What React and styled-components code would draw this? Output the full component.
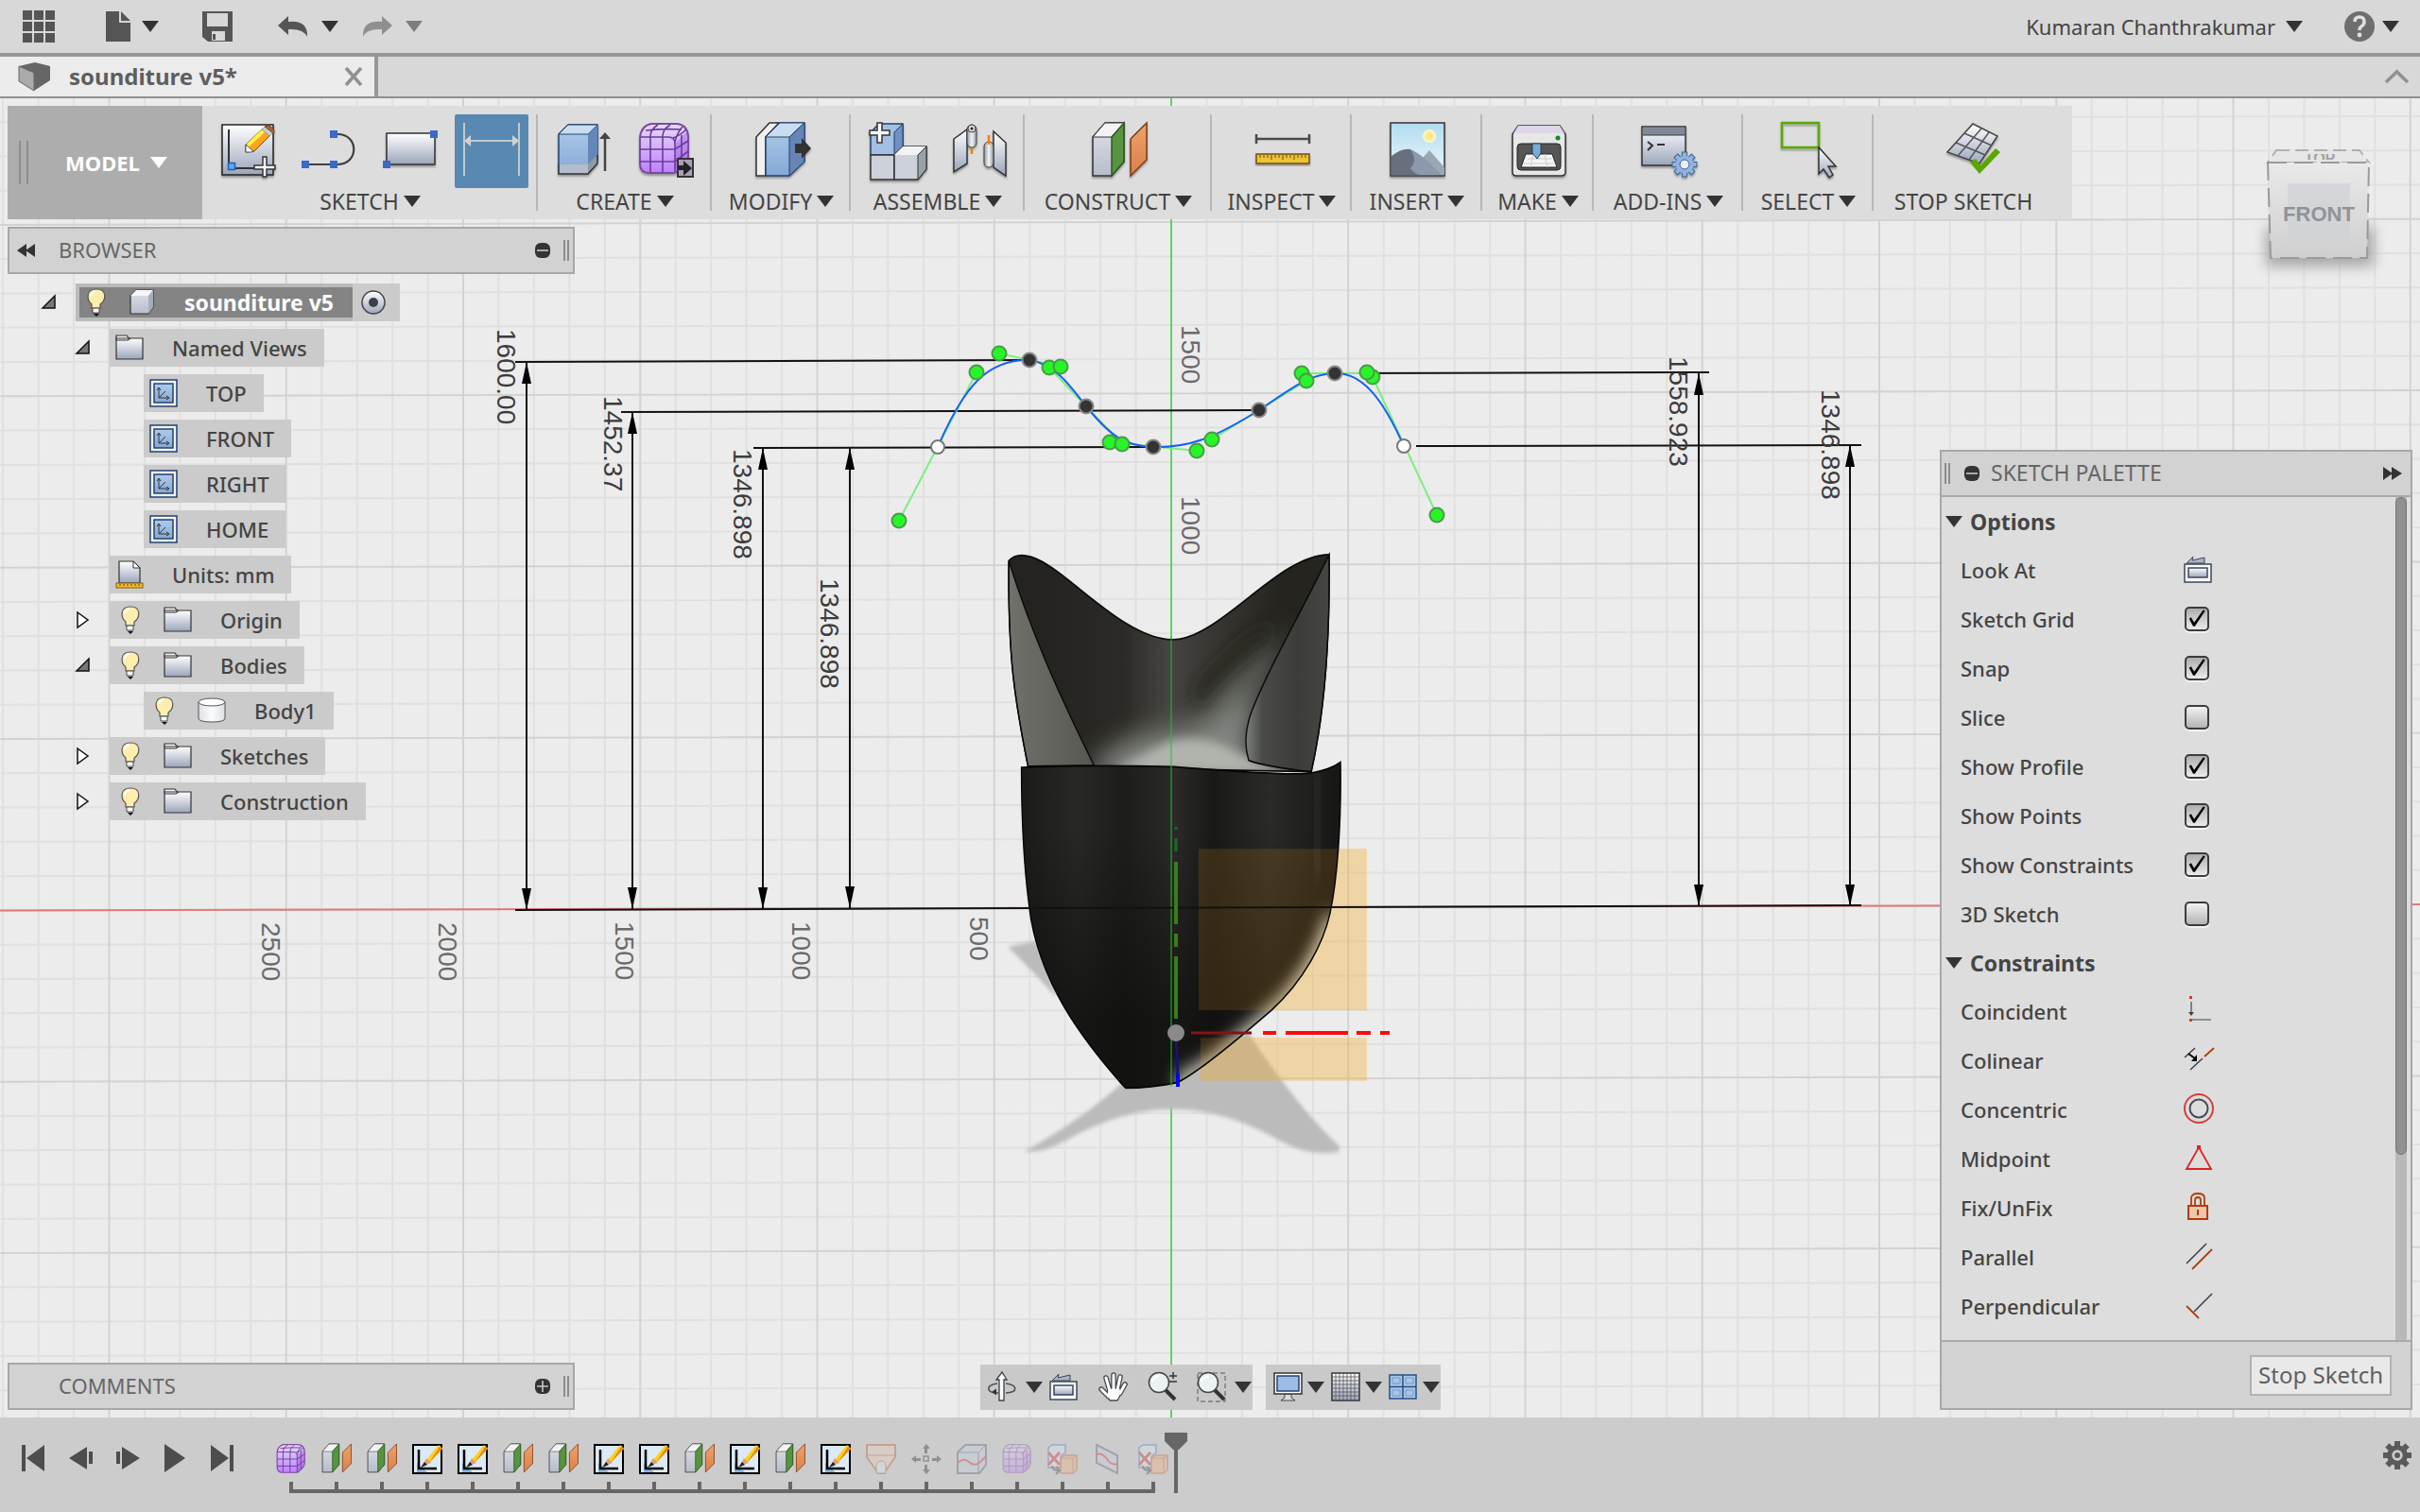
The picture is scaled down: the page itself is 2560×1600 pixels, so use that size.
import React, { useState } from 'react';
import styled, { createGlobalStyle } from 'styled-components';

const GlobalStyle = createGlobalStyle`
  * { box-sizing: border-box; }
  body { margin: 0; overflow: hidden; background: #ececec; }
  button { border: none; background: none; padding: 0; font: inherit; color: inherit; cursor: pointer; }
  svg { display: block; flex: none; overflow: visible; }
  ul { list-style: none; margin: 0; padding: 0; }
`;

const Page = styled.div`
  height: 100vh;
  display: flex;
  flex-direction: column;
  font-family: 'Noto Sans', 'Open Sans', sans-serif;
  font-size: 22px;
  line-height: 28px;
  color: #444;
`;

/* ---------- top bars ---------- */

const TopBar = styled.header`
  height: 60px;
  flex: none;
  display: flex;
  align-items: center;
  padding: 0 22px 0 24px;
  background: #d8d8d8;
  border-bottom: 4px solid #979797;
`;

const BarButton = styled.button`
  display: flex;
  align-items: center;
  gap: ${(props) => props.$gap || 12}px;
  margin-right: ${(props) => props.$after || 0}px;
  opacity: ${(props) => (props.$dim ? 0.55 : 1)};
`;

const Spacer = styled.div`
  flex: 1;
`;

const TabBar = styled.nav`
  height: 44px;
  flex: none;
  display: flex;
  align-items: center;
  background: #d8d8d8;
  border-bottom: 2px solid #909090;
  padding-right: 12px;
`;

const Tab = styled.div`
  width: 400px;
  height: 100%;
  display: flex;
  align-items: center;
  padding: 0 12px 0 20px;
  background: #ececec;
  border-right: 4px solid #979797;
  font-size: 24px;
  font-weight: 700;
  color: #5e5e5e;
`;

const TabName = styled.span`
  flex: 1;
  padding-left: 20px;
`;

/* ---------- canvas ---------- */

const Canvas = styled.main`
  flex: 1;
  min-height: 0;
  position: relative;
  overflow: hidden;
`;

const Scene = styled.svg`
  position: absolute;
  inset: 0;
  width: 100%;
  height: 100%;
`;

const Overlay = styled.div`
  position: relative;
  height: 100%;
  display: flex;
  flex-direction: column;
  padding: 8px;
`;

const TopRow = styled.div`
  height: 120px;
  display: flex;
  align-items: flex-start;
  justify-content: space-between;
`;

const Toolbar = styled.div`
  height: 120px;
  display: flex;
  background: #dddddd;
  padding-right: 20px;
`;

const ModelButton = styled.button`
  width: 206px;
  display: flex;
  align-items: center;
  gap: 11px;
  padding-left: 12px;
  background: #adadad;
  color: #fff;
  font-weight: 700;
`;

const ModelGrip = styled.span`
  width: 10px;
  height: 46px;
  border: solid #8c8c8c;
  border-width: 0 2px;
  margin-right: 28px;
`;

const Group = styled.section`
  min-width: ${(props) => props.$w}px;
  margin: 9px 0;
  display: flex;
  flex-direction: column;
  align-items: center;
  border-right: 2px solid ${(props) => (props.$last ? 'transparent' : '#b8b8b8')};
`;

const Tools = styled.div`
  display: flex;
  gap: 8px;
  padding-left: ${(props) => (props.$last ? 20 : 0)}px;
`;

const Tool = styled.button`
  width: 78px;
  height: 78px;
  display: flex;
  align-items: center;
  justify-content: center;
  padding-left: ${(props) => (props.$active ? 0 : 4)}px;
  border-radius: 2px;
  background: ${(props) => (props.$active ? '#5789b2' : 'transparent')};
`;

const GroupLabel = styled.button`
  display: flex;
  align-items: center;
  gap: 5px;
  padding-left: 2px;
  font-size: 23px;
  white-space: nowrap;
`;

const Columns = styled.div`
  flex: 1;
  min-height: 0;
  padding-top: 8px;
  display: grid;
  grid-template-columns: 600px 1fr 600px;
`;

const LeftColumn = styled.div`
  display: flex;
  flex-direction: column;
  justify-content: space-between;
`;

const BottomCell = styled.div`
  display: flex;
  align-items: flex-end;
  justify-content: ${(props) => props.$justify};
  gap: 14px;
`;

const PanelBar = styled.div`
  height: 50px;
  display: flex;
  align-items: center;
  padding: 0 4px 0 8px;
  background: #d2d2d2;
  border: 2px solid #a8a8a8;
  color: #666;
`;

const PanelTitle = styled.span`
  flex: 1;
  padding: 0 0 2px ${(props) => props.$left}px;
`;

const Grip = styled.span`
  width: 6px;
  height: 22px;
  border: solid #8c8c8c;
  border-width: 0 2px;
  margin: ${(props) => props.$margin || '0'};
`;

/* ---------- browser tree ---------- */

const Tree = styled.ul`
  display: flex;
  flex-direction: column;
  gap: 8px;
  margin-top: 10px;
`;

const TreeItem = styled.li`
  display: flex;
  height: 40px;
  padding-left: ${(props) => 36 + props.$level * 36}px;
`;

const Twisty = styled.button`
  width: 36px;
  display: flex;
  align-items: center;
`;

const TreeChip = styled.div`
  display: flex;
  align-items: center;
  padding: 0 18px 0 ${(props) => (props.$bulb ? 12 : 6)}px;
  background: #cbcbcb;
  font-weight: 500;

  span {
    padding-left: 30px;
  }
`;

const BulbSlot = styled.button`
  margin-right: 25px;
`;

const RootChip = styled.div`
  display: flex;
  align-items: center;
  background: #cbcbcb;
  padding-right: 14px;
  gap: 8px;
`;

const RootName = styled.div`
  height: 40px;
  display: flex;
  align-items: center;
  padding: 0 20px 0 8px;
  border: solid #bababa;
  border-width: 4px 0 4px 4px;
  background: #848484;
  color: #fff;
  font-size: 23px;
  font-weight: 700;

  span {
    padding-left: 32px;
  }
`;

/* ---------- navigation ---------- */

const NavBar = styled.div`
  height: 48px;
  display: flex;
  align-items: center;
  gap: 7px;
  padding: 0 1px 0 8px;
  background: #c9c9c9;
`;

const NavButton = styled.button`
  display: flex;
  align-items: center;
  gap: ${(props) => props.$gap || 0}px;
  margin-right: ${(props) => props.$after || 0}px;
`;

/* ---------- sketch palette ---------- */

const Palette = styled.aside`
  width: 500px;
  border: 2px solid #a8a8a8;
  background: #dddddd;
`;

const PaletteHead = styled.div`
  height: 48px;
  display: flex;
  align-items: center;
  padding: 0 9px 0 3px;
  background: #d2d2d2;
  border-bottom: 2px solid #a8a8a8;
  font-size: 23px;
  color: #666;
`;

const PaletteBody = styled.div`
  display: flex;
  padding-right: 4px;
`;

const PaletteList = styled.div`
  flex: 1;
  padding-bottom: 10px;
`;

const SectionHead = styled.button`
  height: 51px;
  display: flex;
  align-items: center;
  gap: 8px;
  padding-left: 4px;
  font-size: 23px;
  font-weight: 700;
`;

const PaletteRow = styled.div`
  height: 52px;
  display: grid;
  grid-template-columns: 236px 1fr;
  align-items: center;
  justify-items: start;
  padding-left: 20px;
  font-weight: 500;
`;

const ScrollTrack = styled.div`
  width: 12px;
  background: #b7b8ba;
`;

const ScrollThumb = styled.div`
  height: 78%;
  border: 1px solid #747474;
  border-radius: 6px;
  background: #919191;
`;

const CheckBox = styled.input`
  appearance: none;
  width: 26px;
  height: 26px;
  margin: 0 0 0 1px;
  border: 2px solid #3c3c3c;
  border-radius: 5px;
  background: linear-gradient(#f2f2f2, #b4b4b4);
  box-shadow: 0 2px 0 #f2f2f2;

  &:checked {
    background: linear-gradient(#adadad, #ebebeb);
  }

  &:checked::before {
    content: '';
    display: block;
    width: 18px;
    height: 18px;
    margin: 1px 0 0 2px;
    background: #000;
    clip-path: polygon(4% 54%, 16% 46%, 34% 76%, 88% 2%, 98% 8%, 38% 98%, 28% 98%);
  }
`;

const PaletteFoot = styled.div`
  height: 72px;
  display: flex;
  align-items: center;
  justify-content: flex-end;
  padding-right: 20px;
  background: #d2d2d2;
  border-top: 2px solid #a8a8a8;
`;

const StopButton = styled.button`
  height: 43px;
  padding: 0 7px;
  border: 2px solid #b2b2b2;
  background: #e9e9e9;
  font-size: 24px;
  color: #5e5e5e;
`;

/* ---------- timeline ---------- */

const Timeline = styled.footer`
  height: 100px;
  flex: none;
  display: flex;
  align-items: flex-start;
  padding: 0 8px 0 10px;
  background: #cccccc;
`;

const PlayButton = styled.button`
  width: 50px;
  height: 86px;
  display: flex;
  align-items: center;
  justify-content: center;
`;

const History = styled.div`
  padding: 28px 0 0 24px;
`;

const Features = styled.div`
  display: flex;
`;

const Feature = styled.button`
  width: 48px;
  display: flex;
  justify-content: center;
  opacity: ${(props) => (props.$rolled ? 0.35 : 1)};
`;

const Track = styled.div`
  height: 12px;
  margin: 8px 22px 0;
  display: flex;
  justify-content: space-between;
  border-bottom: 4px solid #666;
`;

const Tick = styled.i`
  width: 4px;
  height: 8px;
  background: #666;
`;

const Marker = styled.svg`
  margin: 16px 0 0 -12px;
`;

const GearButton = styled.button`
  margin: 24px 0 0 auto;
`;

/* ---------- icons ---------- */

const Defs = () => (
  <svg width="0" height="0" style={{ position: 'absolute' }} aria-hidden="true">
    <defs>
      <linearGradient id="steel" x1="0" y1="0" x2="0" y2="1">
        <stop offset="0" stopColor="#fff" />
        <stop offset="1" stopColor="#9ba5bb" />
      </linearGradient>
      <linearGradient id="blue" x1="0" y1="0" x2="0" y2="1">
        <stop offset="0" stopColor="#b0cbea" />
        <stop offset="1" stopColor="#84a9d6" />
      </linearGradient>
      <linearGradient id="purple" x1="0" y1="0" x2="0" y2="1">
        <stop offset="0" stopColor="#e6dcf3" />
        <stop offset="1" stopColor="#bd80ff" />
      </linearGradient>
      <linearGradient id="greySide" x1="0" y1="0" x2="0" y2="1">
        <stop offset="0" stopColor="#dfe2e8" />
        <stop offset="1" stopColor="#b7bccb" />
      </linearGradient>
      <linearGradient id="sky" x1="0" y1="0" x2="0" y2="1">
        <stop offset="0" stopColor="#b1dcf0" />
        <stop offset="1" stopColor="#eef7fc" />
      </linearGradient>
      <linearGradient id="orangeFace" x1="0" y1="0" x2="0" y2="1">
        <stop offset="0" stopColor="#f0a36f" />
        <stop offset="1" stopColor="#d97f49" />
      </linearGradient>
      <linearGradient id="tube" x1="0" y1="0" x2="1" y2="0">
        <stop offset="0" stopColor="#8d98a3" />
        <stop offset="0.5" stopColor="#f4f6f8" />
        <stop offset="1" stopColor="#8d98a3" />
      </linearGradient>
      <filter id="drop" x="-20%" y="-20%" width="140%" height="150%">
        <feDropShadow dx="0" dy="2" stdDeviation="1" floodOpacity="0.35" />
      </filter>
    </defs>
  </svg>
);

const Icon = ({ size = 60, h, box = size, children }) => (
  <svg
    width={size}
    height={h || size}
    viewBox={`0 0 ${box} ${h || box}`}
    fill="none"
    aria-hidden="true"
  >
    {children}
  </svg>
);

const Caret = ({ color = '#333' }) => (
  <Icon size={18} h={12}>
    <path d="M0 0h18L9 12z" fill={color} />
  </Icon>
);

const SketchIcon = () => (
  <Icon>
    <g filter="url(#drop)">
      <rect x="1" y="2" width="54" height="53" fill="url(#steel)" stroke="#222" strokeWidth="1.5" />
      <path d="M8 7v41h28" stroke="#333" strokeWidth="2" />
      <rect x="7.5" y="42.5" width="7" height="7" fill="#5aa5f5" stroke="#1f62b0" strokeWidth="1.5" />
      <path d="M26 23L44 6l8 7-17 17-9 1z" fill="#f9a61c" stroke="#7a4a12" strokeWidth="1" />
      <path d="M28 24L46 7" stroke="#fff04a" strokeWidth="4" />
      <path d="M26 23l8 7-2 1h-6z" fill="#fff" stroke="#333" strokeWidth="0.8" />
      <path d="M43 7l4-4 8 7-4 4z" fill="#c9ccd2" stroke="#777" strokeWidth="0.6" />
      <path d="M46 4q4-3 8 1t1 6z" fill="#a5643d" stroke="#6b3a1a" strokeWidth="0.8" />
      <path d="M44 36h4v9h9v4h-9v8h-4v-8h-9v-4h9z" fill="#fff" stroke="#333" strokeWidth="1.5" />
    </g>
  </Icon>
);

const LineIcon = () => (
  <Icon>
    <path d="M4 44h33c23 0 23-32 0-32" stroke="#3f3f42" strokeWidth="2.2" />
    <path d="M-1 40h8v8h-8zM29 40h8v8h-8zM29 8h8v8h-8z" fill="#3a69c8" />
  </Icon>
);

const RectIcon = () => (
  <Icon>
    <rect x="3" y="11" width="51" height="33" fill="url(#steel)" stroke="#333" strokeWidth="1.5" filter="url(#drop)" />
    <path d="M-1 40h8v8h-8zM49 8h8v8h-8z" fill="#3a69c8" />
  </Icon>
);

const DimensionIcon = () => (
  <Icon>
    <path d="M1 0v56M59 0v56M6 19h48" stroke="#c4c8cb" strokeWidth="2" />
    <path d="M1 19l7-6v12zM59 19l-7-6v12z" fill="#d0d3d5" />
  </Icon>
);

const ExtrudeIcon = () => (
  <Icon>
    <g filter="url(#drop)">
      <path d="M2 12L12 2h31v37L33 53H2z" fill="url(#blue)" stroke="#24406e" strokeWidth="1.5" />
      <path d="M2 12L12 2h31L33 12z" fill="#c9dcf0" stroke="#24406e" />
      <path d="M33 12L43 2v33L33 44z" fill="#6586b8" />
      <path d="M2 44h31v10H2z" fill="#b5bccb" />
      <path d="M33 44l10-10v9L33 54z" fill="#8f9aa5" />
      <path d="M2 44v10h31l10-11v-9" stroke="#333" strokeWidth="1.5" />
    </g>
    <path d="M51 51V16" stroke="#444" strokeWidth="2.5" />
    <path d="M45 17l6-7 6 7z" fill="#444" />
  </Icon>
);

const FormShape = () => (
  <>
    <path
      d="M14 1h27q11 1 12 13v22q-1 7-10 14-2 3-7 3H12Q2 53 2 43V16Q3 3 14 1z"
      fill="url(#purple)"
      stroke="#7d4ba3"
      strokeWidth="2"
    />
    <path d="M39 22Q45 15 52 9l1 8v18q-3 7-10 14l-4 2z" fill="#9a4ed6" opacity="0.4" />
    <path
      d="M3 15h29q7 0 7 7v30M2 28h37l14-9M2 41h37l14-11M13 52V14q0-7 8-12M26 53V14q0-7 8-12M39 20q2-9 8-16M8 8q20-2 38-1M46 47V13M37 16q8-3 14-9"
      stroke="#6a3aa0"
      strokeWidth="1.6"
    />
  </>
);

const FormIcon = () => (
  <Icon>
    <g filter="url(#drop)">
      <FormShape />
    </g>
    <rect x="42" y="38" width="16" height="19" fill="#a9a0b5" stroke="#333" strokeWidth="2" />
    <path d="M43 45h5v-5l9 8-9 8v-6h-5z" fill="#222" />
  </Icon>
);

const ModifyIcon = () => (
  <Icon>
    <g filter="url(#drop)">
      <path d="M2 15L16 0h10L12 15v41H2z" fill="#f0f0f0" stroke="#333" strokeWidth="1.5" />
      <path d="M12 15L27 0h26v41L37 56H12z" fill="url(#blue)" stroke="#24406e" strokeWidth="1.5" />
      <path d="M12 15L27 0h26L37 15z" fill="#c9dcf0" stroke="#24406e" />
      <path d="M37 15L53 0v41L37 56z" fill="#6685b4" stroke="#24406e" />
      <path d="M43 22h7v-6l10 11-10 11v-6h-7z" fill="#333" />
    </g>
  </Icon>
);

const ComponentIcon = () => (
  <Icon>
    <g filter="url(#drop)">
      <path d="M1 10L10 1h25v24L26 34H1z" fill="#a3bfe3" stroke="#24406e" strokeWidth="1.5" />
      <path d="M26 10l9-9v24l-9 9z" fill="#6f8fc4" stroke="#24406e" />
      <path d="M1 34h25v26H1z" fill="#cdd1d9" stroke="#333" strokeWidth="1.5" />
      <path d="M26 34l9-9h25v24L51 60H26z" fill="#cdd1d9" stroke="#333" strokeWidth="1.5" />
      <path d="M26 34l9-9h25l-9 9z" fill="#f1f2f4" />
      <path d="M51 34l9-9v24L51 60z" fill="#98a2ab" stroke="#333" />
      <path d="M8 0h5v8h8v5h-8v8H8v-8H0V8h8z" fill="#fff" stroke="#333" strokeWidth="1.5" />
    </g>
  </Icon>
);

const JointIcon = () => (
  <Icon>
    <g filter="url(#drop)">
      <path d="M3 17L17 7v36L3 52z" fill="url(#steel)" stroke="#333" strokeWidth="1.5" />
      <rect x="17" y="2" width="10" height="24" rx="5" fill="url(#tube)" stroke="#444" />
      <circle cx="22" cy="6" r="4" fill="#ddd" stroke="#444" />
      <circle cx="22" cy="6" r="1.5" fill="#222" />
      <path d="M45 9l13 12v35L45 47z" fill="url(#steel)" stroke="#333" strokeWidth="1.5" />
      <rect x="35" y="20" width="10" height="27" rx="5" fill="url(#tube)" stroke="#444" />
    </g>
    <path d="M22 27v6M40 13v10" stroke="#ff7a00" strokeWidth="2.5" />
  </Icon>
);

const PlanesShape = () => (
  <>
    <path d="M2 15L15 0h20v41L22 56H2z" fill="url(#greySide)" stroke="#333" strokeWidth="1.5" />
    <path d="M2 15L15 0h20L22 15z" fill="#f3f3f5" stroke="#333" />
    <path d="M22 15L35 0v41L22 56z" fill="#58933f" stroke="#2c5a1c" strokeWidth="1.5" />
    <path d="M42 17L59 0v39L42 56z" fill="url(#orangeFace)" stroke="#7a3a12" strokeWidth="1.5" />
  </>
);

const ConstructIcon = () => (
  <Icon>
    <g filter="url(#drop)">
      <PlanesShape />
    </g>
  </Icon>
);

const InspectIcon = () => (
  <Icon>
    <path d="M2 17h56M2 12v10M58 12v10" stroke="#4a4a4a" strokeWidth="2.5" />
    <rect x="2" y="33" width="56" height="10" fill="#eac435" stroke="#7a4a12" strokeWidth="1.5" filter="url(#drop)" />
    <path d="M6 34v3M10 34v3M14 34v3M18 34v5M22 34v3M26 34v3M30 34v5M34 34v3M38 34v3M42 34v5M46 34v3M50 34v3M54 34v3" stroke="#6b4a12" />
  </Icon>
);

const InsertIcon = () => (
  <Icon>
    <g filter="url(#drop)">
      <rect x="1" y="0" width="57" height="56" fill="url(#sky)" stroke="#333" strokeWidth="1.5" />
      <circle cx="42" cy="14" r="7" fill="#fff6c8" />
      <circle cx="42" cy="14" r="5" fill="#ffe98a" />
      <path d="M28 45l14-16 16 18v8H34z" fill="#9aa7b5" />
      <path d="M2 35q12-9 20-7 14 8 32 27H2z" fill="#68707f" />
      <path d="M22 28q8 12 0 20 4 6 10 7h22Q36 34 22 28z" fill="#8c98ab" />
    </g>
  </Icon>
);

const MakeIcon = () => (
  <Icon>
    <g filter="url(#drop)">
      <path d="M8 3h44l6 9v40q0 4-4 4H6q-4 0-4-4V12z" fill="#e7e7e7" stroke="#333" strokeWidth="1.5" />
      <path d="M8 3h44l5 8H3z" fill="#dcd6e6" />
      <rect x="7" y="22" width="46" height="28" rx="4" fill="#555" stroke="#222" />
      <path d="M16 33h28l5 14H11z" fill="#f5f5f5" stroke="#222" />
      <path d="M18 38h26M14 43h32M24 33l-3 14M36 33l3 14" stroke="#ccc" />
      <path d="M23 22h9v10l-4 6-5-6z" fill="#79acd6" stroke="#245" />
    </g>
    <circle cx="50" cy="16" r="2.5" fill="#128a1a" />
  </Icon>
);

const Cog = ({ cx, cy, r, fill, stroke, hole }) => {
  const teeth = [0, 45, 90, 135];
  return (
    <g transform={`translate(${cx} ${cy})`}>
      {teeth.map((a) => (
        <rect
          key={a}
          x={-r * 0.2}
          y={-r}
          width={r * 0.4}
          height={r * 2}
          fill={fill}
          stroke={stroke}
          transform={`rotate(${a})`}
        />
      ))}
      <circle r={r * 0.72} fill={fill} />
      <circle r={r * 0.38} fill={hole} stroke={stroke} />
    </g>
  );
};

const AddinsIcon = () => (
  <Icon>
    <g filter="url(#drop)">
      <rect x="1" y="4" width="46" height="41" fill="url(#steel)" stroke="#333" strokeWidth="1.5" />
      <rect x="2" y="5" width="44" height="8" fill="#7f8a99" />
      <path d="M2 13h44" stroke="#333" />
      <path d="M7 20l5 4-5 5M17 23h8" stroke="#333" strokeWidth="2" />
      <Cog cx={46} cy={44} r={13} fill="#8fb4de" stroke="#3e6290" hole="#e8eef6" />
    </g>
  </Icon>
);

const SelectIcon = () => (
  <Icon>
    <rect x="1" y="0" width="39" height="26" stroke="#58a800" strokeWidth="2.5" filter="url(#drop)" />
    <path d="M40 26v28l5-5 6 9 4-3-5-9h8z" fill="url(#steel)" stroke="#333" strokeWidth="1.5" filter="url(#drop)" />
  </Icon>
);

const StopIcon = () => (
  <Icon>
    <g filter="url(#drop)">
      <path d="M29 1l26 13-19 29L2 31z" fill="url(#steel)" stroke="#444" strokeWidth="1.5" />
      <path d="M38 6L13 35M46 10L25 39M20 11l29 13M11 21l31 13" stroke="#555" strokeWidth="1.5" />
    </g>
    <path d="M26 42l6-4 5 7 16-18 5 4-22 23z" fill="#58a800" />
  </Icon>
);

const Bulb = () => (
  <Icon size={20} h={30}>
    <path d="M10 1c-12 0-10 12-5 16v4h9v-4c6-4 8-16-4-16z" fill="#fdeeae" stroke="#555" strokeWidth="1.2" />
    <path d="M4 8q1-4 5-5" stroke="#fff" strokeWidth="2" />
    <path d="M6 21h7v5H6z" fill="#fff" stroke="#444" />
    <path d="M7 27h6l-3 3z" fill="#111" />
  </Icon>
);

const FolderIcon = () => (
  <Icon size={30} h={28}>
    <path d="M1 1h11l3 4h-14z" fill="#eef0f5" stroke="#333" strokeWidth="1.2" />
    <path d="M1 4h28v22H1z" fill="url(#steel)" stroke="#333" strokeWidth="1.2" />
    <path d="M1 6h12l3-2" stroke="#333" strokeWidth="1.2" />
  </Icon>
);

const ViewIcon = () => (
  <Icon size={30}>
    <rect x="1" y="1" width="28" height="28" fill="#eef4fb" stroke="#24406e" strokeWidth="1.5" />
    <rect x="5" y="5" width="20" height="20" fill="url(#blue)" stroke="#24406e" strokeWidth="1.5" />
    <path d="M10 10v10h10M10 20l7-7M8 12l2-3 2 3M18 18l3 2-3 2" stroke="#333" />
  </Icon>
);

const UnitsIcon = () => (
  <Icon size={30}>
    <path d="M4 1h15l7 7v16H4z" fill="url(#steel)" stroke="#333" strokeWidth="1.2" />
    <path d="M19 1v7h7z" fill="#fff" stroke="#333" />
    <rect x="1" y="24" width="28" height="5" fill="#f0b92a" stroke="#8a5a12" />
    <path d="M5 25v2M9 25v2M13 25v2M17 25v2M21 25v2M25 25v2" stroke="#6b4a12" />
  </Icon>
);

const BodyIcon = () => (
  <Icon size={30} h={28}>
    <path d="M1 5v17q0 4 14 4t14-4V5z" fill="url(#tube)" />
    <path d="M1 5v17q0 4 14 4t14-4V5z" fill="#fff" fillOpacity="0.7" stroke="#555" />
    <ellipse cx="15" cy="5" rx="14" ry="4" fill="#fff" stroke="#555" />
  </Icon>
);

const CubeIcon = () => (
  <Icon size={26} h={28}>
    <path d="M1 7l6-6h18v18l-5 7H1z" fill="url(#greySide)" stroke="#333" strokeWidth="1.2" />
    <path d="M1 7l6-6h18l-5 6z" fill="#f6f6f8" />
    <path d="M20 7l5-6v18l-5 7z" fill="#a4adb8" />
  </Icon>
);

const TwistyIcon = ({ open }) => (
  <Icon size={16} h={18}>
    {open ? (
      <path d="M1 15L14 2v13z" fill="#777" stroke="#111" strokeWidth="1.5" />
    ) : (
      <path d="M2 1l11 8-11 8z" fill="#fff" stroke="#111" strokeWidth="1.5" />
    )}
  </Icon>
);

const ToggleIcon = ({ plus }) => (
  <Icon size={16}>
    <rect width="16" height="16" rx="6" fill="#333" />
    <path d={plus ? 'M2 8h12M8 2v12' : 'M2 8h12'} stroke="#c8c8c8" strokeWidth="1.6" />
  </Icon>
);

const LookAtIcon = () => (
  <Icon size={30}>
    <path d="M3 8l7-7-1 4 13-3v6z" fill="#aab4c4" stroke="#3b4658" />
    <rect x="1" y="9" width="28" height="19" fill="#fff" stroke="#3b4658" strokeWidth="1.5" />
    <rect x="5" y="13" width="20" height="10" fill="url(#steel)" stroke="#3b4658" strokeWidth="1.5" />
  </Icon>
);

const constraintIcons = {
  Coincident: (
    <>
      <path d="M8 6v14M8 25h21" stroke="#444" strokeWidth="1.2" />
      <path d="M5 17l3 4 3-4z" fill="#444" />
      <path d="M6 0h3v3H6zM6 24h3v3H6z" fill="#e8340c" />
    </>
  ),
  Colinear: (
    <>
      <path d="M1 13L12 3M7 26l13-12" stroke="#3b3f50" strokeWidth="1.5" />
      <path d="M22 12L32 3" stroke="#b13c0c" strokeWidth="1.8" />
      <path d="M5 9l7 5" stroke="#000" strokeWidth="2" />
      <path d="M14 10v7H8z" fill="#000" />
    </>
  ),
  Concentric: (
    <>
      <circle cx="16" cy="15" r="15" stroke="#dd3a36" strokeWidth="2" />
      <circle cx="16" cy="15" r="9.5" stroke="#414b5a" strokeWidth="2" />
    </>
  ),
  Midpoint: (
    <>
      <path d="M16 4l13 23H3z" stroke="#dd2222" strokeWidth="1.8" />
      <path d="M14 2h4v4h-4z" fill="#dd2222" />
    </>
  ),
  'Fix/UnFix': (
    <>
      <path d="M8 14V6q0-5 7-5t7 5v8M12 14V8q0-3 3-3t3 3v6" stroke="#b13c0c" strokeWidth="1.8" />
      <rect x="5" y="14" width="20" height="14" fill="#f1c4ad" stroke="#b13c0c" strokeWidth="2" />
      <path d="M15 18v6" stroke="#b13c0c" strokeWidth="2" />
    </>
  ),
  Parallel: (
    <>
      <path d="M3 23L24 2" stroke="#3b3f50" strokeWidth="1.6" />
      <path d="M9 29L30 8" stroke="#b13c0c" strokeWidth="1.8" />
    </>
  ),
  Perpendicular: (
    <>
      <path d="M11 22L30 3" stroke="#3b3f50" strokeWidth="1.6" />
      <path d="M3 16l13 13" stroke="#b13c0c" strokeWidth="1.8" />
    </>
  ),
};

const SmallSketch = () => (
  <Icon size={32}>
    <rect x="1" y="1" width="30" height="30" fill="#dceaf6" stroke="#000" strokeWidth="2" />
    <path d="M5 30V20l11 10z" fill="#5f9fd8" opacity="0.7" />
    <path d="M7 6v20h19" stroke="#000" strokeWidth="2.5" />
    <path d="M15 17L28 1l4 4-14 15z" fill="#ffcf1a" />
    <path d="M18 20L32 5v-1l-3-1z" fill="#e08a10" />
    <path d="M11 23l4-8 5 5z" fill="#e0a070" />
    <path d="M9 25l4-6 3 3z" fill="#222" />
  </Icon>
);

const SmallPlanes = () => (
  <Icon size={32} box={60}>
    <PlanesShape />
  </Icon>
);

const SmallForm = () => (
  <Icon size={32} box={56}>
    <FormShape />
  </Icon>
);

const SmallStitch = () => (
  <Icon size={32}>
    <path d="M1 1h30v13L19 31h-6L1 14z" fill="#f3cdb8" stroke="#b5572a" strokeWidth="2" />
    <path d="M1 12h30" stroke="#b5572a" />
    <path d="M11 31v-7q0-6 5-6t5 6v7z" fill="#e8e8e8" stroke="#666" />
  </Icon>
);

const SmallMove = () => (
  <Icon size={32}>
    <path d="M16 0l4 5h-3v5h-3V5h-2zM16 32l4-5h-3v-5h-3v5h-2zM0 16l5-4v3h5v3H5v2zM32 16l-5-4v3h-5v3h5v2z" fill="#222" />
    <rect x="13" y="13" width="5" height="5" stroke="#222" strokeWidth="1.5" />
  </Icon>
);

const SmallSplit = () => (
  <Icon size={32}>
    <path d="M1 9l8-8h22v21l-7 9H1z" fill="#c3cfdf" stroke="#4c5a73" strokeWidth="2" />
    <path d="M1 9h22l8-8M23 9v22" stroke="#4c5a73" />
    <path d="M1 20q7-6 12-1t11 1l7-7" stroke="#e02020" strokeWidth="2" />
  </Icon>
);

const SmallCopy = () => (
  <Icon size={32}>
    <path d="M1 4l4-3h14v8l-5 4v12H1z" fill="#dce8f5" stroke="#2c7ac4" strokeWidth="1.5" />
    <path d="M14 15l4-3h13v15l-4 4H14z" fill="#f5ad78" stroke="#c06028" strokeWidth="1.5" />
    <path d="M14 15h13v16M27 15l4-3" stroke="#c06028" />
    <path d="M1 9l12 13M13 9L1 22" stroke="#d01c1c" strokeWidth="3" />
    <path d="M5 23q0 5 7 5M9 24l4 4-4 4" stroke="#333" strokeWidth="2" />
  </Icon>
);

const SmallPlaneSplit = () => (
  <Icon size={32}>
    <path d="M4 1l22 11v19L4 20z" fill="#c3cbd8" stroke="#4c5a73" strokeWidth="2" />
    <path d="M4 11q6-2 11 5t11 5" stroke="#e02020" strokeWidth="2" />
  </Icon>
);

const OrbitIcon = () => (
  <Icon size={30} h={32}>
    <path d="M10 12C-3 14-2 22 11 22M19 12c13 2 13 9 0 10" stroke="#4a4f55" strokeWidth="1.6" />
    <path d="M17 30h-5V8H9l6-8 5 8h-3z" fill="#fff" stroke="#3a4046" strokeWidth="1.3" />
    <path d="M9 17.5v7L4 21z" fill="#333" />
  </Icon>
);

const fingers = 'M3 18l8 8M8 6l4 14M16 3v15M23 5l-3 14M28 13l-5 9';

const HandIcon = () => (
  <Icon size={30} h={32}>
    <g strokeLinecap="round">
      <path d={fingers} stroke="#444a50" strokeWidth="5.6" />
      <path d="M10 17h13l1 6-4 7h-8l-3-6z" fill="#fff" stroke="#444a50" strokeWidth="1.4" strokeLinejoin="round" />
      <path d={fingers} stroke="#fff" strokeWidth="3" />
    </g>
  </Icon>
);

const ZoomIcon = ({ windowed }) => (
  <Icon size={31} h={32}>
    {windowed && <path d="M1 1h29v30H1z" stroke="#555" strokeDasharray="5 3" />}
    <path d="M19 19l10 10" stroke="#333" strokeWidth="4" />
    <circle cx="12" cy="11" r="10.5" fill="#e8f3f2" stroke="#444" strokeWidth="1.5" />
    <path d="M5 10q2-5 7-6" stroke="#fff" strokeWidth="2" />
    {!windowed && <path d="M27 0v7M23 4h8M23 10h8" stroke="#333" strokeWidth="1.5" />}
  </Icon>
);

const MonitorIcon = () => (
  <Icon size={31} h={32}>
    <path d="M12 23h7v4l4 3H8l4-3z" fill="#ddd" stroke="#444" />
    <rect x="1" y="1" width="29" height="22" fill="#fff" stroke="#333" strokeWidth="1.5" />
    <rect x="4" y="4" width="23" height="16" fill="#9bbde4" stroke="#24406e" strokeWidth="1.5" />
  </Icon>
);

const GridIcon = () => (
  <Icon size={31} h={32}>
    <rect x="1" y="1" width="29" height="29" fill="url(#steel)" stroke="#333" strokeWidth="1.5" />
    <path d="M1 5h29M1 9h29M1 13h29M1 17h29M1 21h29M1 25h29M5 1v29M9 1v29M13 1v29M17 1v29M21 1v29M25 1v29" stroke="#555" strokeWidth="0.8" />
  </Icon>
);

const ViewportsIcon = () => (
  <Icon size={31} h={32}>
    <rect x="1" y="3" width="28" height="25" fill="#a9c6e8" stroke="#24508a" strokeWidth="1.5" />
    <path d="M15 3v25M1 15.5h28" stroke="#24508a" strokeWidth="1.5" />
    <path d="M4 6h8v6H4zM18 6h8v6h-8zM4 19h8v6H4zM18 19h8v6h-8z" stroke="#7798c4" />
  </Icon>
);

/* ---------- 3D scene ---------- */

const AXIS_X = 1239;
const MAJOR_X = 187.25;
const PITCH_Y = 36.27;
const TILT = 6.3;

const gridPath = (major) => {
  let d = '';
  for (let i = -34; i <= 36; i++) {
    if ((i % 5 === 0) === major) d += `M${AXIS_X + (i * MAJOR_X) / 5} 100V1504`;
  }
  for (let k = -4; k <= 36; k++) {
    const y = 238 + k * PITCH_Y;
    if ((k % 5 === 0) === major) d += `M0 ${y}L2560 ${y - TILT}`;
  }
  return d;
};

const dimensions = [
  { x: 557, top: 383, base: 963 },
  { x: 669, top: 436, base: 962 },
  { x: 807, top: 474, base: 962 },
  { x: 899, top: 474, base: 961 },
  { x: 1797, top: 395, base: 959 },
  { x: 1957, top: 471, base: 959 },
];

const leaders = [
  'M545 383L1089 381',
  'M657 436L1332 434',
  'M797 474L1220 473',
  'M1412 395L1808 394',
  'M1498 472L1969 471',
  'M545 963L1969 958',
];

const sceneLabels = [
  ['1600.00', 526, 348],
  ['1452.37', 639, 419],
  ['1346.898', 776, 475],
  ['1346.898', 868, 612],
  ['1558.923', 1766, 377],
  ['1346.898', 1927, 412],
];

const axisLabels = [
  ['1500', 1250, 344],
  ['1000', 1250, 525],
  ['2500', 277, 976],
  ['2000', 464, 976],
  ['1500', 651, 975],
  ['1000', 838, 975],
  ['500', 1026, 970],
];

const handles = [
  [951, 551], [1033, 394], [1057, 374], [1110, 389], [1122, 388], [1174, 468], [1187, 470],
  [1266, 477], [1282, 465], [1377, 395], [1382, 403], [1452, 399], [1446, 394], [1520, 545],
];

const fitPoints = [[1089, 381], [1149, 430], [1220, 473], [1332, 434], [1412, 395]];

const CUP =
  'M292 565Q500 558 760 563Q1000 578 1130 580Q1220 580 1272 552C1275 700 1262 830 1240 910C1220 980 1160 1070 1060 1140C940 1220 830 1290 770 1312Q690 1325 612 1325L600 1315C480 1210 340 1070 315 890C295 770 292 660 292 565Z';
const BACK =
  'M253 75Q275 55 320 65C420 85 600 260 755 262C900 262 1080 60 1237 60C1240 250 1225 430 1182 575L312 562C270 400 250 300 253 75Z';

const Body = () => (
  <g transform="translate(980 560) scale(0.3444 0.4464)">
    <g fill="#bbbbbb" filter="url(#soft)">
      <path d="M250 990L335 976L400 1110Q330 1050 250 990Z" />
      <path d="M620 1300Q480 1400 300 1475Q360 1480 430 1448Q600 1375 755 1375Q900 1375 1050 1435Q1150 1480 1210 1478Q1280 1482 1268 1462Q1150 1380 985 1190L770 1300Z" />
    </g>
    <g fill="#f5ab22" fillOpacity="0.35" stroke="#f5ab22" strokeOpacity="0.3">
      <path d="M836 758h516v382H836zM842 1206h510v101H842z" />
    </g>
    <path d={BACK} fill="url(#backFill)" />
    <g clipPath="url(#backClip)">
      <path d="M880 420Q930 330 1110 230L1020 420Q900 420 740 500Z" fill="#6c6f6b" filter="url(#haze)" opacity="0.7" />
      <path d="M480 590Q560 500 700 480Q820 480 910 420Q980 370 1010 420L985 480L1000 600Z" fill="#80837e" filter="url(#haze)" />
      <path d="M570 570Q680 530 740 505Q830 485 920 515Q1030 560 1190 585Z" fill="#b0b4ad" filter="url(#melt)" />
      <path d="M830 400Q920 300 1060 240" stroke="#22211e" strokeWidth="28" fill="none" filter="url(#glow)" />
    </g>
    <g stroke="#0a0a0a" strokeWidth="4">
      <path d="M253 75C320 240 400 380 515 560L312 562C270 400 250 300 253 75Z" fill="url(#leftFill)" />
      <path d="M1237 60C1240 250 1225 430 1182 575C1100 568 1030 560 990 548C975 510 980 470 1000 430C1050 330 1150 200 1237 60Z" fill="url(#rightFill)" />
      <path d={BACK} fill="none" />
    </g>
    <path d={CUP} fill="url(#cupFill)" />
    <g clipPath="url(#cupClip)">
      <path d={CUP} fill="url(#cupShade)" />
      <path d="M1252 920C1220 1000 1160 1085 1070 1150C940 1235 850 1295 770 1322" stroke="#d8d2c2" strokeWidth="50" fill="none" filter="url(#glow)" />
      <path d="M1200 570Q1215 700 1195 830" stroke="#5a5a58" strokeWidth="14" fill="none" filter="url(#glow)" opacity="0.6" />
      <path d="M836 758h516v382H836zM842 1206h510v101H842z" fill="#e89a20" fillOpacity="0.16" />
    </g>
    <path d={CUP} fill="none" stroke="#050505" strokeWidth="4" />
  </g>
);

const Viewport = () => (
  <Scene viewBox="0 104 2560 1396" preserveAspectRatio="xMidYMid slice" role="img" aria-label="Front view of the model">
    <defs>
      <filter id="soft" x="-20%" y="-20%" width="140%" height="140%">
        <feGaussianBlur stdDeviation="5" />
      </filter>
      <filter id="melt" x="-20%" y="-50%" width="140%" height="200%">
        <feGaussianBlur stdDeviation="12" />
      </filter>
      <filter id="glow" x="-30%" y="-30%" width="160%" height="160%">
        <feGaussianBlur stdDeviation="22" />
      </filter>
      <filter id="haze" x="-40%" y="-60%" width="180%" height="220%">
        <feGaussianBlur stdDeviation="32" />
      </filter>
      <linearGradient id="backFill" x1="0" y1="0" x2="1" y2="0">
        <stop offset="0.1" stopColor="#24231f" />
        <stop offset="0.36" stopColor="#2b2a26" />
        <stop offset="0.5" stopColor="#464541" />
        <stop offset="0.6" stopColor="#3b3a36" />
        <stop offset="0.85" stopColor="#25241f" />
      </linearGradient>
      <linearGradient id="leftFill" x1="0" y1="0" x2="1" y2="0">
        <stop offset="0" stopColor="#6f716a" />
        <stop offset="1" stopColor="#565751" />
      </linearGradient>
      <linearGradient id="rightFill" x1="0" y1="0" x2="1" y2="0">
        <stop offset="0" stopColor="#7c7f7a" />
        <stop offset="0.2" stopColor="#4a4b47" />
        <stop offset="0.6" stopColor="#3c3d38" />
        <stop offset="1" stopColor="#454641" />
      </linearGradient>
      <linearGradient id="cupFill" x1="0" y1="0" x2="1" y2="0">
        <stop offset="0" stopColor="#1b1b1a" />
        <stop offset="0.18" stopColor="#282826" />
        <stop offset="0.32" stopColor="#1d1d1c" />
        <stop offset="0.48" stopColor="#2b2a29" />
        <stop offset="0.6" stopColor="#191918" />
        <stop offset="0.78" stopColor="#2a2a28" />
        <stop offset="1" stopColor="#161615" />
      </linearGradient>
      <linearGradient id="cupShade" x1="0" y1="0" x2="0" y2="1">
        <stop offset="0.2" stopColor="#0d0d0c" stopOpacity="0" />
        <stop offset="0.8" stopColor="#0d0d0c" stopOpacity="0.7" />
      </linearGradient>
      <clipPath id="cupClip">
        <path d={CUP} />
      </clipPath>
      <clipPath id="backClip">
        <path d={BACK} />
      </clipPath>
    </defs>
    <rect y="100" width="2560" height="1404" fill="#ececec" />
    <path d={gridPath(false)} stroke="#e0e0e0" strokeWidth="2" />
    <path d={gridPath(true)} stroke="#d2d2d2" strokeWidth="2" />
    <path d={`M0 963.4L2560 ${963.4 - TILT}`} stroke="#e07a7a" strokeWidth="2" />
    <path d="M1239 100V1504" stroke="#5fd265" strokeWidth="2" />
    <Body />
    <path d="M1239 673V1150" stroke="#22c02c" strokeWidth="2" opacity="0.5" />
    <g stroke="#111" strokeWidth="2">
      {leaders.map((d) => (
        <path key={d} d={d} />
      ))}
      {dimensions.map(({ x, top, base }) => (
        <g key={x}>
          <path d={`M${x} ${top}V${base}`} />
          <path d={`M${x} ${top}l5 23h-10zM${x} ${base}l5 -23h-10z`} fill="#000" stroke="none" />
        </g>
      ))}
    </g>
    <path d="M1244 875v3M1244 887v14" stroke="#1b6a20" strokeWidth="3" />
    <path d="M1244 912v66M1244 988v14M1244 1012v66" stroke="#3c7d16" strokeWidth="4" />
    <path d="M1260 1093h64" stroke="#8a1212" strokeWidth="3" />
    <path d="M1336 1093h14M1360 1093h66M1435 1093h15M1460 1093h10" stroke="#ff0a0a" strokeWidth="4" />
    <path d="M1244 1098L1246 1137" stroke="#14147a" strokeWidth="3" />
    <path d="M1246 1136V1150" stroke="#0000ff" strokeWidth="4" />
    <circle cx="1244" cy="1093" r="9" fill="#8a8a8a" />
    <g fontFamily="'Liberation Sans', sans-serif" fontSize="28">
      {sceneLabels.map(([text, x, y]) => (
        <text key={`${x}-${y}`} transform={`translate(${x} ${y}) rotate(90)`} fill="#3c3c3c">
          {text}
        </text>
      ))}
      {axisLabels.map(([text, x, y]) => (
        <text key={`${x}-${y}`} transform={`translate(${x} ${y}) rotate(90)`} fill="#6a6a6a">
          {text}
        </text>
      ))}
    </g>
    <g stroke="#7dee7d" strokeWidth="2" fill="none">
      <path d="M951 551L1033 394M1057 374L1122 388M1110 389L1187 470M1174 468L1266 477M1282 465L1382 403M1377 395H1446M1452 399L1520 545" />
    </g>
    <path
      d="M992 473C1020 408 1045 380 1089 381C1115 385 1130 405 1149 430C1175 462 1190 472 1220 473C1262 474 1290 460 1332 434C1370 408 1385 396 1412 395C1440 394 1462 420 1485 472"
      stroke="#1560f5"
      strokeWidth="2"
      fill="none"
    />
    {handles.map(([x, y]) => (
      <circle key={`${x}-${y}`} cx={x} cy={y} r="7.5" fill="#27f527" stroke="#4b9a4b" strokeWidth="2" />
    ))}
    {fitPoints.map(([x, y]) => (
      <circle key={x} cx={x} cy={y} r="7.5" fill="#333" stroke="#8a8a8a" strokeWidth="2" />
    ))}
    <circle cx="992" cy="473" r="7" fill="#fff" stroke="#777" strokeWidth="2" />
    <circle cx="1485" cy="472" r="7" fill="#fff" stroke="#777" strokeWidth="2" />
  </Scene>
);

const CubeButton = styled.button`
  margin: 38px 37px 0 0;
`;

const ViewCube = () => (
  <CubeButton aria-label="View cube">
    <svg width="124" height="150" viewBox="2391 150 124 150">
      <defs>
        <linearGradient id="cubeFace" x1="0" y1="0" x2="0" y2="1">
          <stop offset="0" stopColor="#e9e9e9" />
          <stop offset="1" stopColor="#cfcfcf" />
        </linearGradient>
        <filter id="cubeShadow" x="-20%" y="-50%" width="140%" height="200%">
          <feGaussianBlur stdDeviation="7" />
        </filter>
      </defs>
      <rect x="2397" y="240" width="114" height="42" fill="#a8a8a8" filter="url(#cubeShadow)" />
      <path d="M2408 159h88l10 13h-107z" fill="#e6e6e6" stroke="#b0b0b0" strokeWidth="2" strokeDasharray="14 6" />
      <path d="M2399 172h107l-2 101h-102z" fill="url(#cubeFace)" stroke="#9a9a9a" strokeWidth="2" strokeDasharray="20 8" />
      <rect x="2420" y="194" width="66" height="62" fill="#cfd1d6" opacity="0.7" />
      <clipPath id="topFace">
        <path d="M2408 163h90v6h-90z" />
      </clipPath>
      <g fontFamily="'Liberation Sans', sans-serif" fontWeight="700" textAnchor="middle">
        <text x="2454" y="173" fontSize="16" fill="#a0a3a6" clipPath="url(#topFace)">
          TOP
        </text>
        <text x="2453" y="234" fontSize="22" fill="#8f9398">
          FRONT
        </text>
      </g>
    </svg>
  </CubeButton>
);

/* ---------- data ---------- */

const toolGroups = [
  { label: 'SKETCH', w: 355, tools: [SketchIcon, LineIcon, RectIcon, DimensionIcon], active: 3 },
  { label: 'CREATE', w: 184, tools: [ExtrudeIcon, FormIcon] },
  { label: 'MODIFY', w: 147, tools: [ModifyIcon] },
  { label: 'ASSEMBLE', w: 184, tools: [ComponentIcon, JointIcon] },
  { label: 'CONSTRUCT', w: 198, tools: [ConstructIcon] },
  { label: 'INSPECT', w: 148, tools: [InspectIcon] },
  { label: 'INSERT', w: 138, tools: [InsertIcon] },
  { label: 'MAKE', w: 118, tools: [MakeIcon] },
  { label: 'ADD-INS', w: 158, tools: [AddinsIcon] },
  { label: 'SELECT', w: 138, tools: [SelectIcon] },
  { label: 'STOP SKETCH', w: 190, tools: [StopIcon], last: true },
];

const treeRows = [
  { name: 'Named Views', level: 1, icon: FolderIcon, open: true },
  { name: 'TOP', level: 2, icon: ViewIcon },
  { name: 'FRONT', level: 2, icon: ViewIcon },
  { name: 'RIGHT', level: 2, icon: ViewIcon },
  { name: 'HOME', level: 2, icon: ViewIcon },
  { name: 'Units: mm', level: 1, icon: UnitsIcon },
  { name: 'Origin', level: 1, icon: FolderIcon, open: false, bulb: true },
  { name: 'Bodies', level: 1, icon: FolderIcon, open: true, bulb: true },
  { name: 'Body1', level: 2, icon: BodyIcon, bulb: true },
  { name: 'Sketches', level: 1, icon: FolderIcon, open: false, bulb: true },
  { name: 'Construction', level: 1, icon: FolderIcon, open: false, bulb: true },
];

const initialOptions = {
  'Sketch Grid': true,
  Snap: true,
  Slice: false,
  'Show Profile': true,
  'Show Points': true,
  'Show Constraints': true,
  '3D Sketch': false,
};

const P = SmallPlanes;
const S = SmallSketch;
const features = [
  SmallForm, P, P, S, S, P, P, S, S, P, S, P, S,
  SmallStitch, SmallMove, SmallSplit, SmallForm, SmallCopy, SmallPlaneSplit, SmallCopy,
];
const ROLLED_FROM = 13;

const playback = [
  { name: 'Go to start', d: 'M0 1h4v28H0zM24 1v28L5 15z' },
  { name: 'Step back', d: 'M0 15L19 3v24zM21 8h4v13h-4z' },
  { name: 'Step forward', d: 'M0 8h4v13H0zM6 3l19 12L6 27z' },
  { name: 'Play', d: 'M1 0l22 15L1 30z' },
  { name: 'Go to end', d: 'M0 1l19 14L0 29zM20 1h4v28h-4z' },
];

const App = () => {
  const [options, setOptions] = useState(initialOptions);

  const toggle = (name) => setOptions((prev) => ({ ...prev, [name]: !prev[name] }));

  return (
    <Page>
      <GlobalStyle />
      <Defs />
      <TopBar>
        <BarButton $after={54} aria-label="Data panel">
          <Icon size={34} h={34}>
            <path
              d="M0 0h10v10H0zM12 0h10v10H12zM24 0h10v10H24zM0 12h10v10H0zM12 12h10v10H12zM24 12h10v10H24zM0 24h10v10H0zM12 24h10v10H12zM24 24h10v10H24z"
              fill="#555"
            />
          </Icon>
        </BarButton>
        <BarButton $after={46} aria-label="File">
          <Icon size={26} h={32}>
            <path d="M0 0h14v12h12v20H0zM16 0l10 10H16z" fill="#555" />
          </Icon>
          <Caret />
        </BarButton>
        <BarButton $after={48} aria-label="Save">
          <Icon size={32}>
            <path d="M0 0h32v32H6l-6-5zM5 2v14h22V2zM10 21v10h14V21z" fill="#555" fillRule="evenodd" />
            <path d="M11 24h3v6h-3z" fill="#555" />
          </Icon>
        </BarButton>
        <BarButton $gap={14} $after={25} aria-label="Undo">
          <Icon size={32} h={22}>
            <path d="M0 10L11 0v6q21-2 20 16-4-9-20-8v6z" fill="#555" />
          </Icon>
          <Caret />
        </BarButton>
        <BarButton $gap={14} $dim aria-label="Redo">
          <Icon size={32} h={22}>
            <path d="M32 10L21 0v6Q0 4 1 22q4-9 20-8v6z" fill="#555" />
          </Icon>
          <Caret />
        </BarButton>
        <Spacer />
        <BarButton $gap={11} $after={44}>
          Kumaran Chanthrakumar
          <Caret />
        </BarButton>
        <BarButton $gap={8} aria-label="Help">
          <Icon size={32}>
            <circle cx="16" cy="16" r="16" fill="#6e6e6e" />
            <path d="M11 11q0-5 5-5t5 5q0 3-3 5-2 1-2 4" stroke="#e0e0e0" strokeWidth="3.5" />
            <circle cx="16" cy="25" r="2.4" fill="#e0e0e0" />
          </Icon>
          <Caret />
        </BarButton>
      </TopBar>

      <TabBar>
        <Tab>
          <Icon size={33} h={30}>
            <path d="M0 4L17 0l16 4v15L16 30 0 20z" fill="#666" />
            <path d="M0 4l16 7v19L0 20z" fill="#a9abab" stroke="#666" />
          </Icon>
          <TabName>sounditure v5*</TabName>
          <button aria-label="Close tab">
            <Icon size={20}>
              <path d="M2 1l16 18M18 1L2 19" stroke="#8f8f95" strokeWidth="3.5" />
            </Icon>
          </button>
        </Tab>
        <Spacer />
        <button aria-label="Collapse tabs">
          <Icon size={25} h={14}>
            <path d="M1 13L12.5 2 24 13" stroke="#8f8f95" strokeWidth="3.5" />
          </Icon>
        </button>
      </TabBar>

      <Canvas>
        <Viewport />
        <Overlay>
          <TopRow>
            <Toolbar>
              <ModelButton>
                <ModelGrip />
                MODEL
                <Caret color="#fff" />
              </ModelButton>
              {toolGroups.map(({ label, w, tools, active, last }) => (
                <Group key={label} $w={w} $last={last}>
                  <Tools $last={last}>
                    {tools.map((ToolIcon, i) => (
                      <Tool key={i} $active={active === i} aria-label={`${label} ${i + 1}`}>
                        <ToolIcon />
                      </Tool>
                    ))}
                  </Tools>
                  <GroupLabel>
                    {label}
                    {!last && <Caret />}
                  </GroupLabel>
                </Group>
              ))}
            </Toolbar>
            <ViewCube />
          </TopRow>

          <Columns>
            <LeftColumn>
              <div>
                <PanelBar>
                  <Icon size={20} h={14}>
                    <path d="M0 7l10-7v14zM9 7l10-7v14z" fill="#333" />
                  </Icon>
                  <PanelTitle $left={24}>BROWSER</PanelTitle>
                  <button aria-label="Minimise browser">
                    <ToggleIcon />
                  </button>
                  <Grip $margin="0 0 0 14px" />
                </PanelBar>
                <Tree>
                  <TreeItem $level={0}>
                    <Twisty aria-label="Collapse sounditure v5">
                      <TwistyIcon open />
                    </Twisty>
                    <RootChip>
                      <RootName>
                        <BulbSlot aria-label="Toggle visibility">
                          <Bulb />
                        </BulbSlot>
                        <CubeIcon />
                        <span>sounditure v5</span>
                      </RootName>
                      <Icon size={28}>
                        <circle cx="14" cy="14" r="12" fill="url(#steel)" stroke="#444" strokeWidth="1.5" />
                        <circle cx="14" cy="14" r="5" fill="#3a3f4a" />
                      </Icon>
                    </RootChip>
                  </TreeItem>
                  {treeRows.map(({ name, level, icon: RowIcon, open, bulb }) => (
                    <TreeItem key={name} $level={level}>
                      <Twisty aria-label={`Expand ${name}`}>
                        {open !== undefined && <TwistyIcon open={open} />}
                      </Twisty>
                      <TreeChip $bulb={bulb}>
                        {bulb && (
                          <BulbSlot aria-label="Toggle visibility">
                            <Bulb />
                          </BulbSlot>
                        )}
                        <RowIcon />
                        <span>{name}</span>
                      </TreeChip>
                    </TreeItem>
                  ))}
                </Tree>
              </div>
              <PanelBar>
                <PanelTitle $left={44}>COMMENTS</PanelTitle>
                <button aria-label="Expand comments">
                  <ToggleIcon plus />
                </button>
                <Grip $margin="0 0 0 14px" />
              </PanelBar>
            </LeftColumn>

            <BottomCell $justify="center">
              <NavBar>
                <NavButton $gap={10} aria-label="Orbit">
                  <OrbitIcon />
                  <Caret />
                </NavButton>
                <NavButton $after={15} aria-label="Look at">
                  <LookAtIcon />
                </NavButton>
                <NavButton $after={15} aria-label="Pan">
                  <HandIcon />
                </NavButton>
                <NavButton $after={14} aria-label="Zoom">
                  <ZoomIcon />
                </NavButton>
                <NavButton $gap={9} aria-label="Zoom window">
                  <ZoomIcon windowed />
                  <Caret />
                </NavButton>
              </NavBar>
              <NavBar>
                <NavButton $gap={5} aria-label="Display settings">
                  <MonitorIcon />
                  <Caret />
                </NavButton>
                <NavButton $gap={5} aria-label="Grid and snaps">
                  <GridIcon />
                  <Caret />
                </NavButton>
                <NavButton $gap={5} aria-label="Viewports">
                  <ViewportsIcon />
                  <Caret />
                </NavButton>
              </NavBar>
            </BottomCell>

            <BottomCell $justify="flex-end">
              <Palette>
                <PaletteHead>
                  <Grip $margin="0 15px 0 0" />
                  <button aria-label="Minimise palette">
                    <ToggleIcon />
                  </button>
                  <PanelTitle $left={12}>SKETCH PALETTE</PanelTitle>
                  <Icon size={20} h={14}>
                    <path d="M0 0l10 7-10 7zM9 0l11 7-11 7z" fill="#333" />
                  </Icon>
                </PaletteHead>
                <PaletteBody>
                  <PaletteList>
                    <SectionHead>
                      <Caret />
                      Options
                    </SectionHead>
                    <PaletteRow>
                      <span id="look-at">Look At</span>
                      <button aria-labelledby="look-at">
                        <LookAtIcon />
                      </button>
                    </PaletteRow>
                    {Object.keys(options).map((name) => (
                      <PaletteRow key={name}>
                        <label htmlFor={name}>{name}</label>
                        <CheckBox
                          id={name}
                          type="checkbox"
                          checked={options[name]}
                          onChange={() => toggle(name)}
                        />
                      </PaletteRow>
                    ))}
                    <SectionHead>
                      <Caret />
                      Constraints
                    </SectionHead>
                    {Object.keys(constraintIcons).map((name) => (
                      <PaletteRow key={name}>
                        <span id={name}>{name}</span>
                        <button aria-labelledby={name}>
                          <Icon size={32}>{constraintIcons[name]}</Icon>
                        </button>
                      </PaletteRow>
                    ))}
                  </PaletteList>
                  <ScrollTrack>
                    <ScrollThumb />
                  </ScrollTrack>
                </PaletteBody>
                <PaletteFoot>
                  <StopButton>Stop Sketch</StopButton>
                </PaletteFoot>
              </Palette>
            </BottomCell>
          </Columns>
        </Overlay>
      </Canvas>

      <Timeline>
        {playback.map(({ name, d }) => (
          <PlayButton key={name} aria-label={name}>
            <Icon size={24} h={30}>
              <path d={d} fill="#4d4d4f" />
            </Icon>
          </PlayButton>
        ))}
        <History>
          <Features>
            {features.map((FeatureIcon, i) => (
              <Feature key={i} $rolled={i >= ROLLED_FROM} aria-label={`Feature ${i + 1}`}>
                <FeatureIcon />
              </Feature>
            ))}
          </Features>
          <Track>
            {features.map((_, i) => (
              <Tick key={i} />
            ))}
          </Track>
        </History>
        <Marker width="24" height="64" viewBox="0 0 24 64">
          <path d="M0 0h24v9l-9 9h-1v46h-4V18H9L0 9z" fill="#666" />
        </Marker>
        <GearButton aria-label="Settings">
          <Icon size={32}>
            <Cog cx={16} cy={16} r={15} fill="#5a5a5a" hole="#ccc" />
            <circle cx="16" cy="16" r="3" fill="#5a5a5a" />
          </Icon>
        </GearButton>
      </Timeline>
    </Page>
  );
};

export default App;
